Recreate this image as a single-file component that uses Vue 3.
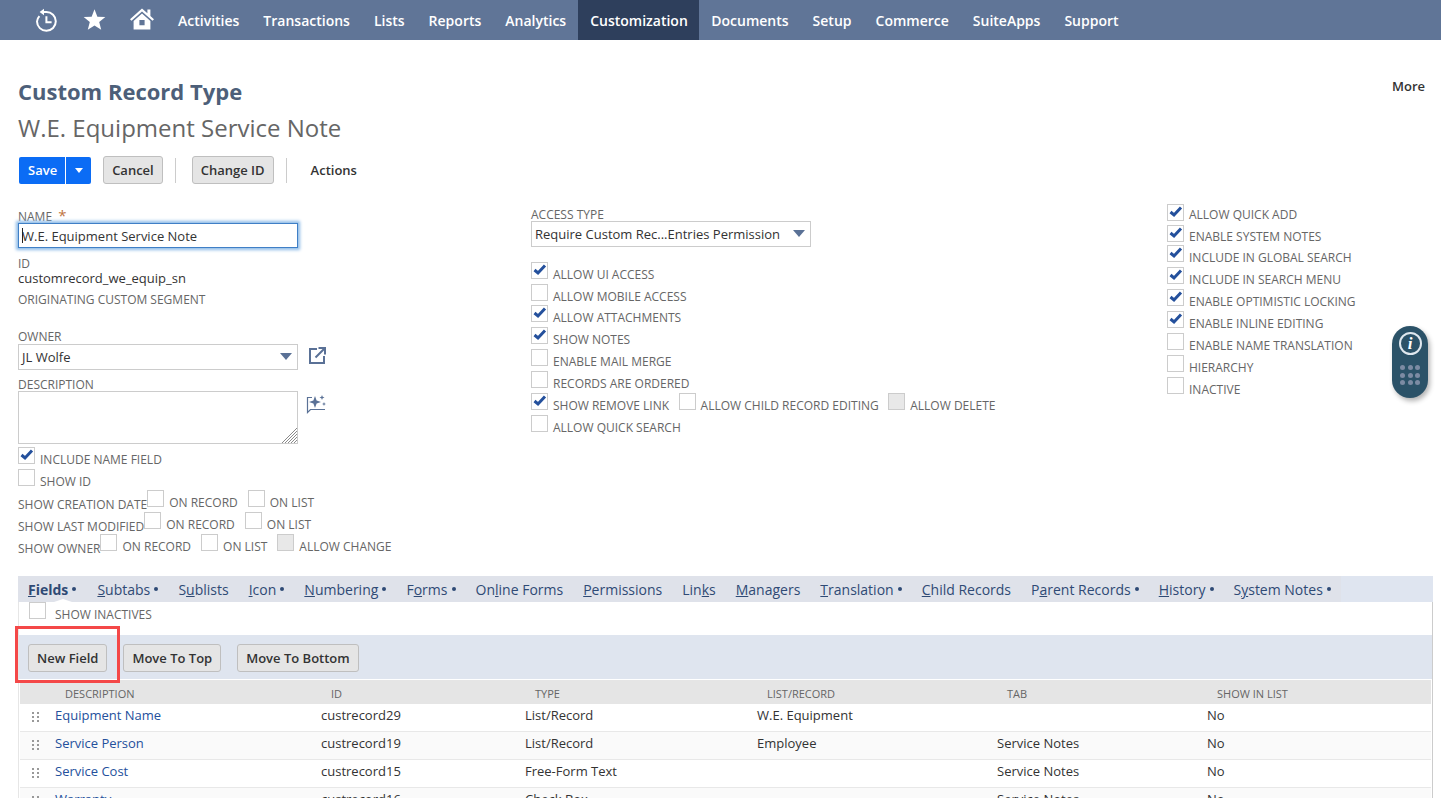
<script setup>
const navItems = ['Activities', 'Transactions', 'Lists', 'Reports', 'Analytics', 'Customization', 'Documents', 'Setup', 'Commerce', 'SuiteApps', 'Support']

const middleChecks = [
  [{ label: 'ALLOW UI ACCESS', checked: true }],
  [{ label: 'ALLOW MOBILE ACCESS' }],
  [{ label: 'ALLOW ATTACHMENTS', checked: true }],
  [{ label: 'SHOW NOTES', checked: true }],
  [{ label: 'ENABLE MAIL MERGE' }],
  [{ label: 'RECORDS ARE ORDERED' }],
  [
    { label: 'SHOW REMOVE LINK', checked: true },
    { label: 'ALLOW CHILD RECORD EDITING' },
    { label: 'ALLOW DELETE', disabled: true }
  ],
  [{ label: 'ALLOW QUICK SEARCH' }]
]

const rightChecks = [
  { label: 'ALLOW QUICK ADD', checked: true },
  { label: 'ENABLE SYSTEM NOTES', checked: true },
  { label: 'INCLUDE IN GLOBAL SEARCH', checked: true },
  { label: 'INCLUDE IN SEARCH MENU', checked: true },
  { label: 'ENABLE OPTIMISTIC LOCKING', checked: true },
  { label: 'ENABLE INLINE EDITING', checked: true },
  { label: 'ENABLE NAME TRANSLATION' },
  { label: 'HIERARCHY' },
  { label: 'INACTIVE' }
]

const showRows = [
  { label: 'SHOW CREATION DATE', options: [{ label: 'ON RECORD' }, { label: 'ON LIST' }] },
  { label: 'SHOW LAST MODIFIED', options: [{ label: 'ON RECORD' }, { label: 'ON LIST' }] },
  { label: 'SHOW OWNER', options: [{ label: 'ON RECORD' }, { label: 'ON LIST' }, { label: 'ALLOW CHANGE', disabled: true }] }
]

// before / key / after keeps the underlined access key as real text
const tabs = [
  { before: '', key: 'F', after: 'ields', dot: true, active: true },
  { before: '', key: 'S', after: 'ubtabs', dot: true },
  { before: 'S', key: 'u', after: 'blists' },
  { before: '', key: 'I', after: 'con', dot: true },
  { before: '', key: 'N', after: 'umbering', dot: true },
  { before: 'F', key: 'o', after: 'rms', dot: true },
  { before: 'On', key: 'l', after: 'ine Forms' },
  { before: '', key: 'P', after: 'ermissions' },
  { before: 'Lin', key: 'k', after: 's' },
  { before: '', key: 'M', after: 'anagers' },
  { before: '', key: 'T', after: 'ranslation', dot: true },
  { before: '', key: 'C', after: 'hild Records' },
  { before: 'P', key: 'a', after: 'rent Records', dot: true },
  { before: '', key: 'H', after: 'istory', dot: true },
  { before: 'S', key: 'y', after: 'stem Notes', dot: true }
]

const columns = ['DESCRIPTION', 'ID', 'TYPE', 'LIST/RECORD', 'TAB', 'SHOW IN LIST']

const rows = [
  ['Equipment Name', 'custrecord29', 'List/Record', 'W.E. Equipment', '', 'No'],
  ['Service Person', 'custrecord19', 'List/Record', 'Employee', 'Service Notes', 'No'],
  ['Service Cost', 'custrecord15', 'Free-Form Text', '', 'Service Notes', 'No'],
  ['Warranty', 'custrecord16', 'Check Box', '', 'Service Notes', 'No']
]
</script>

<template>
  <div class="page">
    <nav class="topbar">
      <div class="nav-icons">
        <svg class="nav-icon history" viewBox="0 0 24 24" fill="none" stroke="#fff">
          <path d="M5.4 8.2A9.6 9.6 0 0 0 3 13.5 9.4 9.4 0 1 0 12.4 4H8.6" stroke-width="2" />
          <path d="M10 .8 5.6 4l4.4 3.2z" fill="#fff" stroke="none" />
          <path d="M12.4 8.2v6h5.2" stroke-width="2" />
        </svg>
        <svg class="nav-icon star" viewBox="0 0 24 24" fill="#fff">
          <path d="M12 1.4l3 7.6 8.3.5-6.4 5.2 2.1 8-7-4.5-7 4.5 2.1-8L.7 9.5 9 9z" />
        </svg>
        <svg class="nav-icon home" viewBox="0 0 24 22" fill="#fff">
          <path d="M12 .5 0 11.2l1.5 1.6L12 3.5l10.5 9.3 1.5-1.6-3.6-3.2V1.6h-3v3.7z" />
          <path d="M12 5.6 3.6 13v8.6h16.8V13zM9.4 12h5.2v5.2H9.4z" fill-rule="evenodd" />
        </svg>
      </div>
      <a v-for="item in navItems" :key="item" class="nav-item" :class="{ active: item === 'Customization' }">{{ item }}</a>
    </nav>

    <header class="heading">
      <div class="titles">
        <h1>Custom Record Type</h1>
        <h2>W.E. Equipment Service Note</h2>
      </div>
      <span class="more">More</span>
    </header>

    <div class="toolbar">
      <div class="save-group">
        <span class="save">Save</span>
        <span class="save-arrow"><i></i></span>
      </div>
      <button class="btn">Cancel</button>
      <span class="divider"></span>
      <button class="btn">Change ID</button>
      <span class="divider"></span>
      <span class="actions">Actions</span>
    </div>

    <section class="form">
      <div class="col col-left">
        <label class="field-label name-label">NAME <span class="req">*</span></label>
        <div class="text-input">W.E. Equipment Service Note<span class="caret"></span></div>
        <div class="field-label id-label">ID</div>
        <div class="value">customrecord_we_equip_sn</div>
        <div class="field-label segment-label">ORIGINATING CUSTOM SEGMENT</div>

        <div class="field-label owner-label">OWNER</div>
        <div class="with-icon">
          <div class="select owner-select">
            <span>JL Wolfe</span>
            <i class="select-arrow"></i>
          </div>
          <svg class="open-icon" viewBox="0 0 17 17" fill="none" stroke="#5a7196" stroke-width="2">
            <path d="M8 2H1v14h14V9" />
            <path d="M6.5 10.5 15 2M9.5 1h6.5v6.5" />
          </svg>
        </div>

        <div class="field-label desc-label">DESCRIPTION</div>
        <div class="with-icon">
          <div class="textarea">
            <svg class="grip" viewBox="0 0 15 15" stroke="#8a8a8a" stroke-width="1">
              <path d="M0 15 15 0M3 15 15 3M6 15l9-9M9 15l6-6M12 15l3-3" />
            </svg>
          </div>
          <svg class="sparkle-icon" viewBox="0 0 20 20" fill="#5a7196">
            <path d="M6 2.5H1.5v15l3-3H19" fill="none" stroke="#5a7196" stroke-width="1.2" />
            <path d="M9 1l1.6 4.4L15 7l-4.4 1.6L9 13 7.4 8.6 3 7l4.4-1.6zM16 0l.7 1.8 1.8.7-1.8.7-.7 1.8-.7-1.8-1.8-.7 1.8-.7zM18 7l.6 1.4 1.4.6-1.4.6-.6 1.4-.6-1.4-1.4-.6 1.4-.6z" />
          </svg>
        </div>

        <div class="check-row first-check">
          <span class="box checked"><svg viewBox="0 0 17 17"><path d="M3.5 8l3.5 3 7-7.5" /></svg></span>
          <span class="check-label">INCLUDE NAME FIELD</span>
        </div>
        <div class="check-row">
          <span class="box"></span>
          <span class="check-label">SHOW ID</span>
        </div>
        <div v-for="row in showRows" :key="row.label" class="show-row">
          <span class="show-label">{{ row.label }}</span>
          <template v-for="option in row.options" :key="option.label">
            <span class="box" :class="{ disabled: option.disabled }"></span>
            <span class="check-label option-label">{{ option.label }}</span>
          </template>
        </div>
      </div>

      <div class="col col-middle">
        <div class="field-label access-label">ACCESS TYPE</div>
        <div class="select access-select">
          <span>Require Custom Rec...Entries Permission</span>
          <i class="select-arrow"></i>
        </div>
        <div class="check-list">
          <div v-for="(group, i) in middleChecks" :key="i" class="check-row">
            <template v-for="check in group" :key="check.label">
              <span class="box" :class="{ checked: check.checked, disabled: check.disabled }">
                <svg v-if="check.checked" viewBox="0 0 17 17"><path d="M3.5 8l3.5 3 7-7.5" /></svg>
              </span>
              <span class="check-label group-label">{{ check.label }}</span>
            </template>
          </div>
        </div>
      </div>

      <div class="col col-right">
        <div v-for="check in rightChecks" :key="check.label" class="check-row">
          <span class="box" :class="{ checked: check.checked }">
            <svg v-if="check.checked" viewBox="0 0 17 17"><path d="M3.5 8l3.5 3 7-7.5" /></svg>
          </span>
          <span class="check-label">{{ check.label }}</span>
        </div>
      </div>
    </section>

    <section class="subtabs">
      <div class="tab-bar">
        <div class="tab-list">
          <a v-for="tab in tabs" :key="tab.key + tab.after" class="tab" :class="{ active: tab.active }">{{ tab.before }}<u>{{ tab.key }}</u>{{ tab.after }}<b v-if="tab.dot" class="dot"></b></a>
        </div>
      </div>
      <div class="panel">
        <div class="check-row inactives">
          <span class="box"></span>
          <span class="check-label">SHOW INACTIVES</span>
        </div>
        <div class="button-band">
          <button class="btn band-btn">New Field</button>
          <button class="btn band-btn">Move To Top</button>
          <button class="btn band-btn">Move To Bottom</button>
          <span class="highlight"></span>
        </div>
        <div class="table">
          <div class="table-row table-head">
            <span class="handle-cell"></span>
            <span v-for="column in columns" :key="column" class="cell">{{ column }}</span>
          </div>
          <div v-for="(row, i) in rows" :key="row[1]" class="table-row" :class="{ alt: i % 2 === 1 }">
            <span class="handle-cell">
              <svg class="handle" viewBox="0 0 7 10" fill="#999">
                <path d="M0 0h2v2H0zM5 0h2v2H5zM0 4h2v2H0zM5 4h2v2H5zM0 8h2v2H0zM5 8h2v2H5z" />
              </svg>
            </span>
            <span v-for="(value, c) in row" :key="c" class="cell" :class="{ link: c === 0 }">{{ value }}</span>
          </div>
        </div>
      </div>
    </section>

    <aside class="widget">
      <span class="info">i</span>
      <span class="dots"><i v-for="n in 9" :key="n"></i></span>
    </aside>
  </div>
</template>

<style scoped>
.page {
  position: relative;
  width: 1441px;
  height: 798px;
  overflow: hidden;
  background: #fff;
  font-family: "Open Sans", sans-serif;
  font-size: 13px;
  color: #333;
}

/* top nav */
.topbar {
  display: flex;
  align-items: stretch;
  height: 40px;
  background: #607597;
}
.nav-icons {
  display: flex;
  align-items: center;
  width: 166px;
  padding-left: 34px;
  box-sizing: border-box;
}
.nav-icon {
  display: block;
  flex: none;
}
.history {
  width: 24px;
  height: 24px;
  margin-top: -1px;
}
.star {
  width: 23px;
  height: 23px;
  margin-left: 25px;
  margin-top: -1px;
}
.home {
  width: 24px;
  height: 22px;
  margin-left: 24px;
  margin-top: -3px;
}
.nav-item {
  display: flex;
  align-items: center;
  padding: 0 12px;
  font-size: 14px;
  font-weight: 600;
  color: #fff;
}
.nav-item.active {
  padding-right: 11.5px;
  background: #2e3f5c;
}

/* page heading */
.heading {
  display: flex;
  justify-content: space-between;
  padding: 36px 16px 0 18px;
}
h1 {
  margin: 0;
  font-size: 22px;
  line-height: 30px;
  font-weight: 700;
  color: #4d5f79;
}
h2 {
  margin: 5px 0 0;
  font-size: 24px;
  line-height: 33px;
  font-weight: 400;
  color: #666;
}
.more {
  margin-top: 1px;
  font-size: 13px;
  line-height: 18px;
  font-weight: 600;
  color: #333;
}

.toolbar {
  display: flex;
  align-items: center;
  height: 28px;
  margin-top: 12px;
  padding-left: 19px;
}
.save-group {
  display: flex;
  height: 27px;
  background: #0b6cf5;
  border-radius: 2px;
  color: #fff;
  font-weight: 600;
}
.save {
  display: flex;
  align-items: center;
  padding: 0 8px 0 9px;
  border-right: 1px solid #fff;
}
.save-arrow {
  display: flex;
  align-items: center;
  justify-content: center;
  width: 25px;
}
.save-arrow i {
  border-top: 5px solid #fff;
  border-left: 4.5px solid transparent;
  border-right: 4.5px solid transparent;
}
.btn {
  box-sizing: border-box;
  height: 28px;
  margin: 0;
  padding: 0 8px;
  border: 1px solid #bfbfbf;
  border-radius: 3px;
  background: #e5e5e5;
  font-family: inherit;
  font-size: 13px;
  font-weight: 600;
  color: #333;
}
.toolbar .btn {
  margin-left: 12px;
}
.divider {
  width: 1px;
  height: 25px;
  margin-left: 12px;
  background: #ccc;
}
.toolbar .divider + .btn {
  margin-left: 16px;
}
.actions {
  margin-left: 24px;
  font-weight: 600;
}

/* form columns */
.form {
  display: grid;
  grid-template-columns: 513px 636px 1fr;
  height: 392px;
  padding-left: 18px;
}
.col {
  display: flex;
  flex-direction: column;
  align-items: flex-start;
}
.field-label {
  font-size: 12px;
  line-height: 16px;
  color: #666;
}
.name-label {
  margin-top: 25px;
  height: 14px;
}
.req {
  margin-left: 3px;
  color: #c0753f;
  font-size: 15px;
  line-height: 12px;
}
.text-input {
  position: relative;
  box-sizing: border-box;
  width: 280px;
  height: 25px;
  padding-left: 3px;
  border: 1px solid #3f7fc6;
  box-shadow: 0 0 3px 2px #8fbce8;
  line-height: 24px;
  color: #333;
}
.caret {
  position: absolute;
  left: 3px;
  top: 4px;
  width: 1px;
  height: 15px;
  background: #222;
}
.id-label {
  margin-top: 8px;
  height: 15px;
  line-height: 15px;
}
.value {
  line-height: 15px;
}
.segment-label {
  margin-top: 6px;
}
.owner-label {
  margin-top: 21px;
  height: 15px;
}
.with-icon {
  display: flex;
  align-items: flex-start;
}
.select {
  display: flex;
  align-items: center;
  justify-content: space-between;
  box-sizing: border-box;
  border: 1px solid #ccc;
  padding: 0 5px 0 3px;
  color: #333;
}
.owner-select {
  width: 280px;
  height: 26px;
}
.access-select {
  width: 280px;
  height: 26px;
}
.select-arrow {
  display: block;
  width: 0;
  height: 0;
  margin-top: -1px;
  border-top: 7px solid #5a7196;
  border-left: 6.5px solid transparent;
  border-right: 6.5px solid transparent;
}
.open-icon {
  width: 17px;
  height: 17px;
  margin: 3px 0 0 11px;
}
.desc-label {
  margin-top: 7px;
  height: 14px;
}
.textarea {
  position: relative;
  box-sizing: border-box;
  width: 280px;
  height: 53px;
  border: 1px solid #ccc;
}
.grip {
  position: absolute;
  right: 0;
  bottom: 0;
  width: 15px;
  height: 15px;
}
.sparkle-icon {
  width: 20px;
  height: 20px;
  margin: 4px 0 0 8px;
}
.check-row {
  display: flex;
  align-items: flex-start;
  height: 21.86px;
  white-space: nowrap;
}
.first-check {
  margin-top: 3px;
}
.box {
  position: relative;
  flex: none;
  box-sizing: border-box;
  width: 17px;
  height: 17px;
  border: 1px solid #ccc;
  background: #fff;
}
.box.disabled {
  background: #e8e8e8;
}
.box svg {
  position: absolute;
  left: -1px;
  top: -1px;
  width: 17px;
  height: 17px;
  fill: none;
  stroke: #24509c;
  stroke-width: 3;
}
.check-label {
  margin-left: 5px;
  font-size: 12px;
  line-height: 16px;
  margin-top: 5px;
  color: #666;
}
.group-label {
  margin-right: 9.5px;
}
.show-row {
  display: flex;
  align-items: flex-start;
  height: 22px;
  font-size: 12px;
  color: #666;
  white-space: nowrap;
}
.check-row + .show-row {
  margin-top: -0.7px;
}
.show-label {
  margin-top: 7px;
  line-height: 16px;
}
.option-label {
  margin: 5px 10px 0 5px;
}

.access-label {
  margin-top: 23px;
  height: 14px;
}
.check-list {
  margin-top: 14.7px;
}
.col-right {
  padding-top: 17.7px;
}
/* first two boxes sit a little lower than the others against their labels */
.col-right .check-row:nth-child(1) .box {
  margin-top: 2px;
}
.col-right .check-row:nth-child(2) .box {
  margin-top: 1px;
}

/* subtabs */
.subtabs {
  margin: 0 8px 0 18px;
}
.tab-bar {
  height: 26px;
  background: #dfe5f0;
}
.tab-list {
  display: inline-flex;
  height: 26px;
  background: #dfe2ea;
}
.tab {
  display: flex;
  align-items: center;
  padding: 0 10px;
  font-size: 14px;
  color: #2f4a75;
  white-space: nowrap;
}
.tab.active {
  position: relative;
  padding-right: 11px;
  font-weight: 700;
}
.tab.active::after {
  content: "";
  position: absolute;
  left: 36px;
  bottom: 0;
  border-bottom: 3px solid #fff;
  border-left: 9px solid transparent;
  border-right: 9px solid transparent;
}
.dot {
  width: 4px;
  height: 4px;
  margin-left: 4.1px;
  border-radius: 50%;
  background: #2f4a75;
}
.panel {
  border-right: 1px solid #ccc;
  border-left: 1px solid #e6e6e6;
}
.inactives {
  height: 33px;
  padding-left: 10px;
}
.inactives .check-label {
  margin: 5px 0 0 9px;
}
.button-band {
  position: relative;
  display: flex;
  align-items: center;
  gap: 16px;
  box-sizing: border-box;
  height: 44px;
  padding: 2px 0 0 9px;
  background: #dfe5ef;
}
.highlight {
  position: absolute;
  left: -4px;
  top: -9px;
  width: 105px;
  height: 57px;
  box-sizing: border-box;
  border: 3px solid #f44848;
}
.table {
  margin: 1px 1px 0 1px;
}
.table-row {
  display: grid;
  grid-template-columns: 35px 266px 204px 232px 240px 210px 1fr;
  align-items: center;
  height: 28px;
  border-bottom: 1px solid #e8e8e8;
  box-sizing: border-box;
}
.table-row.alt {
  background: #fafafa;
}
.table-head {
  height: 24px;
  border-bottom: 0;
  background: #e5e5e5;
  font-size: 11px;
  color: #666;
}
.table-head .cell {
  padding: 2px 0 0 10px;
  margin-top: 0;
}
.cell {
  white-space: nowrap;
  margin-top: -6px;
}
.link {
  color: #24509c;
}
.handle-cell {
  display: flex;
  align-items: center;
  margin-top: -2px;
}
.handle {
  width: 7px;
  height: 10px;
  margin-left: 12px;
}

/* floating widget */
.widget {
  position: absolute;
  left: 1392px;
  top: 326px;
  display: flex;
  flex-direction: column;
  align-items: center;
  width: 36px;
  height: 72px;
  border-radius: 18px;
  background: #2b5268;
  box-shadow: 2px 3px 5px rgba(0, 0, 0, 0.3);
}
.info {
  display: flex;
  align-items: center;
  justify-content: center;
  box-sizing: border-box;
  width: 23px;
  height: 23px;
  margin-top: 6px;
  border: 2px solid #dfe7ee;
  border-radius: 50%;
  font-family: "Liberation Serif", serif;
  font-size: 17px;
  font-style: italic;
  font-weight: 700;
  color: #fff;
}
.dots {
  display: grid;
  grid-template-columns: repeat(3, 5px);
  gap: 2.5px;
  margin-top: 10px;
}
.dots i {
  width: 5px;
  height: 5px;
  border-radius: 50%;
  background: #7c8ba3;
}
</style>

<style>
html, body {
  margin: 0;
  background: #fff;
}
</style>
